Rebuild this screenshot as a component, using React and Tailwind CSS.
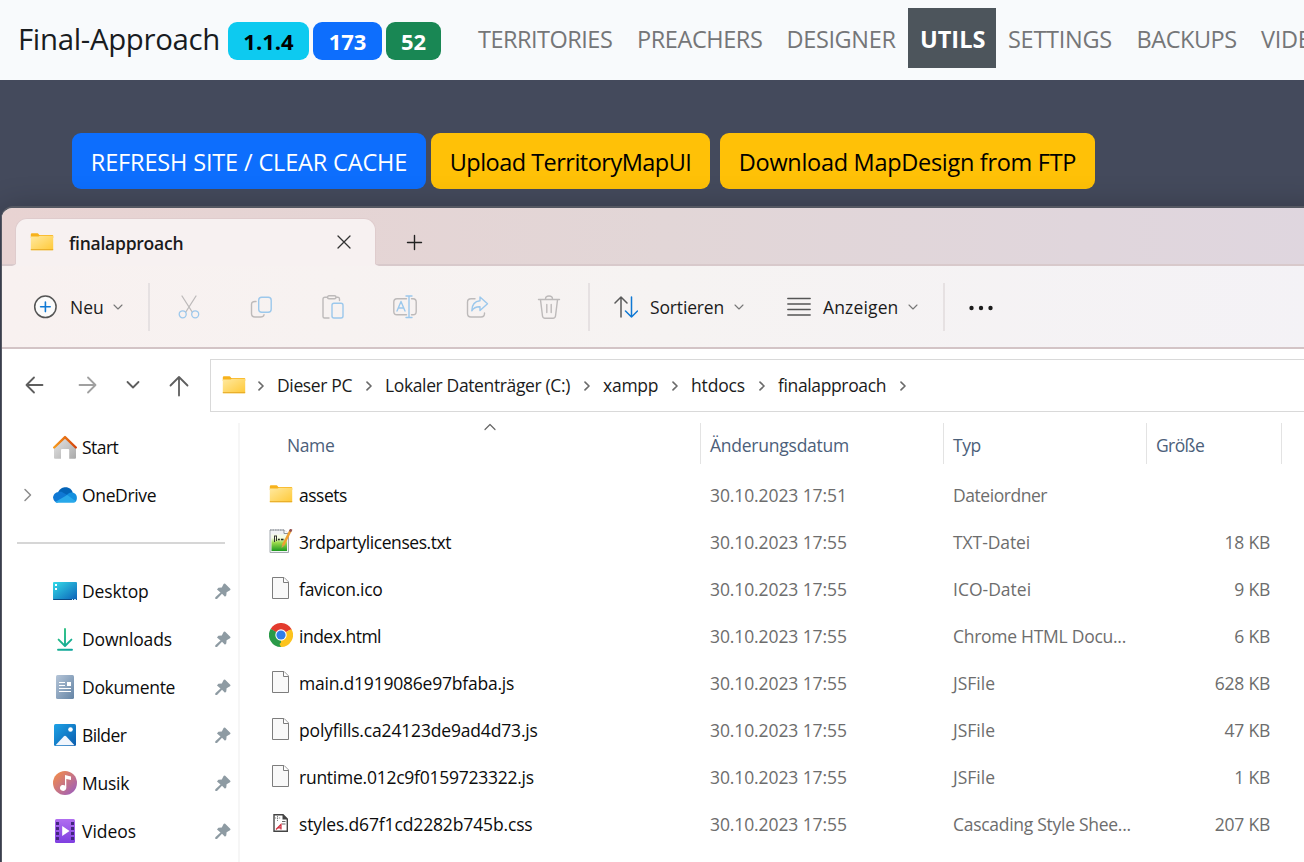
import React from 'react';

/* ---------- icons ---------- */

const Folder = () => (
  <svg width="24" height="20" viewBox="0 0 24 20" className="shrink-0">
    <defs>
      <linearGradient id="folder" x1="0" y1="0" x2="1" y2="1">
        <stop offset="0" stopColor="#ffe9a0" />
        <stop offset="1" stopColor="#ffc937" />
      </linearGradient>
    </defs>
    <path d="M.8 4V2.4Q.8 1.200 2 1.200H7.500Q8.200 1.200 8.500 1.900L9.300 3H22.400Q23.200 3 23.200 3.800V6H.8Z" fill="#f7b21c" />
    <path d="M.8 4.600H8.500L10 3.800H23.200V17.600Q23.200 18.200 22.600 18.200H1.400Q.8 18.200 .8 17.600Z" fill="url(#folder)" />
    <path d="M.8 17.700H23.200" stroke="#e5a823" strokeWidth="1" />
  </svg>
);

const Home = () => (
  <svg width="24" height="24" viewBox="0 0 24 24">
    <defs>
      <linearGradient id="wall" x1="0" y1="0" x2="1" y2="1"><stop offset="0" stopColor="#e8e8e8" /><stop offset="1" stopColor="#a9a9a9" /></linearGradient>
      <linearGradient id="roof" x1="0" y1="0" x2="1" y2="0"><stop offset="0" stopColor="#f79a1c" /><stop offset="1" stopColor="#d5440c" /></linearGradient>
    </defs>
    <path d="M1 12L12 1.500 23 12V22.800Q23 23.800 22 23.800H16.200V15Q16.200 14 15.200 14H9Q8 14 8 15V23.800H2Q1 23.800 1 22.800Z" fill="url(#wall)" />
    <path d="M1.200 12.500L12 2.100 22.800 12.500" fill="none" stroke="url(#roof)" strokeWidth="2.400" strokeLinecap="round" strokeLinejoin="round" />
  </svg>
);

const Cloud = () => (
  <svg width="24" height="16" viewBox="0 0 24 16">
    <path d="M5 5.500C7 1 10 .2 12.500 .2c4 0 6.500 2.400 7.200 5.500L14 10Z" fill="#0364b8" />
    <path d="M8.500 4.800C5 4 .1 6 .1 10.600c0 2.600 2 4.900 4 5.100L16 9Z" fill="#0f78d4" />
    <path d="M15.500 6.500C18 4.600 23.900 5.500 23.900 11c0 1.500-.6 3-1.200 3.500L12 9.500Z" fill="#1490df" />
    <path d="M2.200 14.900L14.200 8 23 14.200c-.7.9-2 1.600-3.300 1.600H5.200c-1.300 0-2.400-.4-3-.9Z" fill="#28a8ea" />
  </svg>
);

const Desktop = () => (
  <svg width="24" height="18" viewBox="0 0 24 18">
    <defs><linearGradient id="desk" x1="0" y1="0" x2="1" y2="1"><stop offset="0" stopColor="#34dbe8" /><stop offset="1" stopColor="#0b61b8" /></linearGradient></defs>
    <rect width="24" height="18" rx="1" fill="url(#desk)" />
    <path d="M0 17H24V17.200Q24 18 23 18H1Q0 18 0 17.200Z" fill="#0b4a86" />
    <path d="M2 2h2v2H2zM2 6h2v2H2z" fill="#fff" />
    <path d="M19 17h1v1h-1zM21 17h2v1h-2z" fill="#bfe6fa" />
  </svg>
);

const Download = () => (
  <svg width="24" height="24" viewBox="0 0 24 24" fill="none" strokeWidth="1.900" strokeLinecap="round" strokeLinejoin="round">
    <defs><linearGradient id="dl" gradientUnits="userSpaceOnUse" x1="4" y1="0" x2="20" y2="24"><stop offset="0" stopColor="#34c77b" /><stop offset="1" stopColor="#0aa39e" /></linearGradient></defs>
    <path d="M12 2V18.500M5.600 12.600L12 19 18.400 12.600M5 22.700H19" stroke="url(#dl)" />
  </svg>
);

const Documents = () => (
  <svg width="24" height="24" viewBox="0 0 24 24">
    <defs><linearGradient id="doc" x1="0" y1="0" x2="1" y2="1"><stop offset="0" stopColor="#b5c5d8" /><stop offset="1" stopColor="#6484a5" /></linearGradient></defs>
    <rect x="3" y="0" width="18" height="24" rx="1.500" fill="url(#doc)" />
    <path d="M6 7.500H12M6 10.500H12M6 13.500H18M6 16.500H18" stroke="#fff" strokeWidth="1.100" />
    <rect x="14" y="7" width="4" height="4" fill="#fff" />
  </svg>
);

const Pictures = () => (
  <svg width="24" height="24" viewBox="0 0 24 24">
    <defs><linearGradient id="pic" x1="0" y1="0" x2="1" y2="1"><stop offset="0" stopColor="#1ea2e6" /><stop offset="1" stopColor="#0a5cad" /></linearGradient></defs>
    <rect x="1" y="1" width="22" height="22" rx="1.500" fill="url(#pic)" />
    <circle cx="17.500" cy="6.500" r="2.300" fill="#fff" />
    <path d="M2.500 22.200L10.700 13.500Q12 12.200 13.300 13.500L21.500 22.200Z" fill="#f1f6fd" />
  </svg>
);

const Music = () => (
  <svg width="24" height="24" viewBox="0 0 24 24">
    <defs><linearGradient id="mus" x1="0" y1="0" x2="1" y2="1"><stop offset=".1" stopColor="#f08a4e" /><stop offset=".9" stopColor="#a060b8" /></linearGradient></defs>
    <circle cx="12" cy="12" r="12" fill="url(#mus)" />
    <path d="M12 4L18 5.500V9L13.300 8V17A3.200 3 0 1 1 12 14.500Z" fill="#fff" />
  </svg>
);

const Videos = () => (
  <svg width="24" height="24" viewBox="0 0 24 24">
    <defs><linearGradient id="vid" x1="0" y1="0" x2="0" y2="1"><stop offset="0" stopColor="#b06ef0" /><stop offset="1" stopColor="#7f3fe0" /></linearGradient></defs>
    <rect x="2" y="0" width="20" height="24" rx="1.500" fill="url(#vid)" />
    <path d="M3 3h3v3H3zM3 8h3v3H3zM3 13h3v3H3zM3 18h3v3H3zM18 3h3v3h-3zM18 8h3v3h-3zM18 13h3v3h-3zM18 18h3v3h-3z" fill="#43267f" />
    <path d="M9.200 7V17L16.500 12Z" fill="#fff" />
  </svg>
);

const Pin = () => (
  <svg width="16" height="17" viewBox="0 0 16 17">
    <path d="M8.600 1Q9.200 .1 10.200 .8L15.200 5.800Q16 6.700 15 7.300L11.600 9.300 11.300 12.600 10 13.700 7 10.700 2 16H.3V14.300L5.500 9.500 2 6.400 3.400 4.800 6.800 4.400Z" fill="#8e9ba3" />
  </svg>
);

const TextFile = () => (
  <svg width="24" height="24" viewBox="0 0 24 24">
    <defs><linearGradient id="npp" x1="0" y1="0" x2="0" y2="1"><stop offset=".2" stopColor="#f4fbe4" /><stop offset=".5" stopColor="#9ad94a" /><stop offset="1" stopColor="#1c9a20" /></linearGradient></defs>
    <path d="M1 1H15L19.500 5V23.500H1Z" fill="#f0f2f4" stroke="#a3a9ae" />
    <path d="M1 1H15" stroke="#8a8f94" strokeDasharray="1.500 1" />
    <path d="M15 1V4.500H19.500" fill="#fff" stroke="#8d9398" />
    <rect x="2.500" y="5.500" width="15.500" height="16.500" fill="url(#npp)" />
    <path d="M5.500 7V13M7.500 7V12M5 7H8" stroke="#333" strokeWidth="1" />
    <path d="M9 10.500h1.800M12 10.500h2.500" stroke="#222" strokeWidth="1.600" />
    <path d="M21.300 2L14 16.500" stroke="#f0a030" strokeWidth="2.600" />
    <path d="M22.300 .2L21 2.700" stroke="#96524e" strokeWidth="2.600" />
    <path d="M13 16L15 17 12.500 19Z" fill="#d89a58" />
  </svg>
);

const BlankFile = () => (
  <svg width="24" height="24" viewBox="0 0 24 24">
    <path d="M3.500 1.500H15L19.500 6V22.500H3.500Z" fill="#f9f9f9" stroke="#7d7d7d" />
    <path d="M14.500 1.500V6.500H19.500" fill="#fff" stroke="#7d7d7d" />
  </svg>
);

const Chrome = () => (
  <svg width="24" height="24" viewBox="0 0 24 24">
    <path d="M12 12L1.600 6A12 12 0 0 1 22.400 6Z" fill="#e33b2e" />
    <path d="M12 12L22.400 6A12 12 0 0 1 12 24L12 12Z" fill="#fcc31e" />
    <path d="M12 12L12 24A12 12 0 0 1 1.600 6L12 12Z" fill="#2a9a48" />
    <path d="M12 6.400H22.600L22.400 6 12 4Z" fill="#e33b2e" />
    <path d="M16.850 14.800L12 24 10.500 21Z" fill="#fcc31e" />
    <path d="M7.150 14.800L1.600 6 7 9Z" fill="#2a9a48" />
    <path d="M16.850 14.800L11.800 24H13Z" fill="#fcc31e" />
    <circle cx="12" cy="12" r="5.700" fill="#fff" />
    <circle cx="12" cy="12" r="4.600" fill="#2f7de9" />
  </svg>
);

const CssFile = () => (
  <svg width="24" height="24" viewBox="0 0 24 24">
    <path d="M5 3.700H14L18.300 8V20.300H5Z" fill="#fff" stroke="#444" strokeWidth="1.400" />
    <path d="M13.500 3V8.500H19Z" fill="#444" />
    <path d="M8.500 5V10M6 7H12" stroke="#777" strokeWidth=".9" strokeDasharray="1.200 .8" />
    <path d="M13 10.500H16.500M13 13H16.500" stroke="#666" />
    <path d="M7 18.500L12 13.500V18.500M9 16.800H12" fill="none" stroke="#cf2c3c" strokeWidth="1.200" />
  </svg>
);

const Line = ({ w = 24, h = 24, d, c = '#5c5c5c', s = 1.5, children }) => (
  <svg width={w} height={h} viewBox={`0 0 ${w} ${h}`} fill="none" stroke={c} strokeWidth={s} strokeLinecap="round" strokeLinejoin="round" className="shrink-0">
    {d && <path d={d} />}
    {children}
  </svg>
);

const G = '#bdbaba';
const B = '#9cc8ec';

const SmallChevron = () => <Line w={10} h={8} d="M1 2L5 6 9 2" c="#777" s={1.1} />;
const CrumbChevron = () => <Line w={8} h={12} d="M2 2.200L6 6 2 9.800" c="#6b6b6b" s={1.7} />;

const tools = [
  <Line key="cut" c={G} s={1.3}>
    <path d="M5 1L15.200 17M19 1L8.800 17" />
    <circle cx="5.700" cy="19.300" r="3.500" stroke={B} />
    <circle cx="18.200" cy="19.300" r="3.500" stroke={B} />
  </Line>,
  <Line key="copy" s={1.4}>
    <path d="M7 6.500H6Q2.500 6.500 2.500 9.500V18.500Q2.500 22 6 22H11.500Q14.500 22 15 19.800" stroke={G} />
    <rect x="9.700" y="2.200" width="12.500" height="15" rx="3" stroke={B} />
  </Line>,
  <Line key="paste" s={1.4}>
    <path d="M6.500 2.200H4Q2 2.200 2 4.200V21.500Q2 23 3.500 23H8M15.500 2.200H17Q18.500 2.200 18.500 4V5.500" stroke={G} />
    <rect x="6.500" y=".8" width="8.500" height="3" rx="1.500" stroke={G} />
    <rect x="11" y="8.200" width="11" height="14.800" rx="2" stroke={B} />
  </Line>,
  <Line key="rename" s={1.4}>
    <path d="M13.500 3.800H4Q.8 3.800 .8 7V16.500Q.8 19.800 4 19.800H13.500M18.500 3.800H20Q23.200 3.800 23.200 7V16.500Q23.200 19.800 20 19.800H18.500" stroke={G} />
    <path d="M16 1V22.500M13 1H19M13 22.500H19M4 16L8 6.500 12 16M5.500 13H10.500" stroke={B} />
  </Line>,
  <Line key="share" s={1.4}>
    <path d="M10 3.700H6Q2.500 3.700 2.500 7.200V18.500Q2.500 22 6 22H16Q19.500 22 19.500 18.500V18" stroke={G} />
    <path d="M15 2L22.500 8.800 15 15.500V11.800Q9.500 11.500 6.800 15.800 7 6.500 15 5.800Z" stroke={B} />
  </Line>,
  <Line key="trash" c={G} s={1.4} d="M1.500 4.500H22.500M8.500 4Q8.500 1 12 1T15.500 4M3.500 4.800L5.500 21Q5.800 23.200 8 23.200H16Q18.200 23.200 18.500 21L20.500 4.800M9.800 9.500V17.500M14.200 9.500V17.500" />,
];

/* ---------- data ---------- */

const nav = [
  ['TERRITORIES', 'w-[159px] tracking-[-0.5px]'],
  ['PREACHERS', 'w-[149.5px] tracking-[-0.42px]'],
  ['DESIGNER', 'w-[133.5px] tracking-[-0.36px]'],
  ['UTILS', 'w-[88px] bg-[#4d555c] font-bold text-white'],
  ['SETTINGS', 'w-[128.500px] tracking-[-0.28px]'],
  ['BACKUPS', 'w-[124.500px] tracking-[-0.45px]'],
  ['VIDEOS', 'tracking-[-0.3px]'],
];

const crumbs = [
  ['Dieser PC', 'w-[108px] tracking-[-0.36px]'],
  ['Lokaler Datenträger (C:)', 'w-[218px] tracking-[-0.37px]'],
  ['xampp', 'w-[88px] tracking-[-0.25px]'],
  ['htdocs', 'w-[87px] tracking-[-0.15px]'],
  ['finalapproach', 'w-[141px] tracking-[-0.37px]'],
];

const places = [
  ['Desktop', Desktop, 'tracking-[-0.12px]'],
  ['Downloads', Download, 'tracking-[-0.14px]'],
  ['Dokumente', Documents, 'tracking-[-0.32px]'],
  ['Bilder', Pictures, 'tracking-[-0.6px]'],
  ['Musik', Music, 'tracking-[-0.25px]'],
  ['Videos', Videos, 'tracking-[-0.05px]'],
];

const files = [
  ['assets', Folder, 'tracking-[-0.5px]', '30.10.2023 17:51', 'Dateiordner', 'tracking-[-0.45px]', ''],
  ['3rdpartylicenses.txt', TextFile, 'tracking-[-0.45px]', '30.10.2023 17:55', 'TXT-Datei', 'tracking-[-0.08px]', '18 KB'],
  ['favicon.ico', BlankFile, 'tracking-[-0.25px]', '30.10.2023 17:55', 'ICO-Datei', '', '9 KB'],
  ['index.html', Chrome, 'tracking-[-0.5px]', '30.10.2023 17:55', 'Chrome HTML Docu...', 'tracking-[-0.27px]', '6 KB'],
  ['main.d1919086e97bfaba.js', BlankFile, 'tracking-[-0.22px]', '30.10.2023 17:55', 'JSFile', '', '628 KB'],
  ['polyfills.ca24123de9ad4d73.js', BlankFile, 'tracking-[-0.17px]', '30.10.2023 17:55', 'JSFile', '', '47 KB'],
  ['runtime.012c9f0159723322.js', BlankFile, 'tracking-[-0.25px]', '30.10.2023 17:55', 'JSFile', '', '1 KB'],
  ['styles.d67f1cd2282b745b.css', CssFile, 'tracking-[-0.14px]', '30.10.2023 17:55', 'Cascading Style Shee...', 'tracking-[-0.28px]', '207 KB'],
];

/* ---------- sections ---------- */

const Badge = ({ className, children }) => (
  <span className={`flex h-[38px] items-center justify-center rounded-[9px] text-[22px] font-bold ${className}`}>{children}</span>
);

function SiteNav() {
  return (
    <header className="flex h-20 shrink-0 items-start overflow-hidden bg-[#f8fafc]">
      <div className="flex h-[82px] w-[466px] shrink-0 items-center gap-1 pl-[18px]">
        <span className="w-[206px] pb-1 text-[29.4px] tracking-[-0.32px] text-[#191c1f]">Final-Approach</span>
        <Badge className="w-[81px] bg-[#0dcaf0] text-black">1.1.4</Badge>
        <Badge className="w-[69px] bg-[#0d6efd] text-white">173</Badge>
        <Badge className="w-[55px] bg-[#198754] text-white">52</Badge>
      </div>
      <nav className="mt-2 flex">
        {nav.map(([label, cls]) => (
          <a key={label} className={`flex h-[60px] shrink-0 items-center px-3 pt-1 text-[23.5px] text-[#757678] ${cls}`}>{label}</a>
        ))}
      </nav>
    </header>
  );
}

function TabStrip() {
  return (
    <div className="flex h-[58px] items-end border-b-2 border-[#d8c9cb] bg-linear-to-r from-[#e8d3d2] via-[#e2d6d7] to-[#dfd6df] pl-[13px]">
      <div className="relative -mb-0.5 flex h-[48px] w-[361px] items-center rounded-t-[12px] border-x border-t border-[#dfcccd] bg-[#f7f1f1] pb-px pl-[14px]">
        <Folder />
        <span className="ml-[15px] w-[267px] pt-0.5 text-[17.5px] font-semibold tracking-[-0.25px] text-[#1b1b1b]">finalapproach</span>
        <Line w={16} h={16} d="M2 2L14 14M14 2L2 14" c="#333" s={1.3} />
        <svg width="5" height="5" viewBox="0 0 5 5" className="absolute -left-[4px] bottom-0">
          <path d="M5 0Q5 4 0 5H5Z" fill="#f7f1f1" />
        </svg>
        <svg width="5" height="5" viewBox="0 0 5 5" className="absolute -right-[4px] bottom-0">
          <path d="M0 0Q0 4 5 5H0Z" fill="#f7f1f1" />
        </svg>
      </div>
      <div className="mb-[13px] ml-[30px]">
        <Line w={17} h={17} d="M8.500 1.500V15.500M1.500 8.500H15.500" c="#222" s={1.4} />
      </div>
    </div>
  );
}

const Divider = () => <div className="h-12 w-0.5 shrink-0 bg-[#e6e1e2]" />;

function Toolbar() {
  return (
    <div className="flex h-[83px] items-center border-b-2 border-[#d3c4c6] bg-linear-to-r from-[#f8f1f0] via-[#f6f3f2] to-[#f4f2f6] text-[17.5px] text-[#1b1b1b]">
      <div className="flex w-[146px] items-center pl-[31px]">
        <Line>
          <circle cx="12.400" cy="11.800" r="10.700" fill="#fbfbfb" stroke="#555" />
          <path d="M7.600 11.800H17.200M12.400 7V16.600" stroke="#0f78d4" strokeWidth="1.600" />
        </Line>
        <span className="ml-[13px] w-[43px] pt-0.5">Neu</span>
        <SmallChevron />
      </div>
      <Divider />
      <div className="mx-[3px] flex">
        {tools.map((icon, i) => (
          <div key={i} className="flex w-[72px] items-center justify-center">{icon}</div>
        ))}
      </div>
      <Divider />
      <div className="flex w-[173px] items-center pl-6">
        <Line s={1.500}>
          <path d="M7 2V22M1 8L7 2 13 8" stroke="#5a5a5a" />
          <path d="M17.500 2V22M11.500 16L17.500 22 23.500 16" stroke="#0f78d4" />
        </Line>
        <span className="ml-3 w-[84px] shrink-0 pt-0.5 tracking-[-0.15px]">Sortieren</span>
        <SmallChevron />
      </div>
      <div className="flex w-[180px] items-center pl-6">
        <Line d="M.8 3.500H23.200M.8 9H23.200M.8 14.500H23.200M.8 20H23.200" s={1.400} c="#555" />
        <span className="ml-3 w-[85px] shrink-0 pt-0.5 tracking-[0.15px]">Anzeigen</span>
        <SmallChevron />
      </div>
      <Divider />
      <svg width="26" height="8" viewBox="0 0 26 8" className="mt-0.5 ml-[23px]" fill="#1b1b1b">
        <circle cx="3.500" cy="4" r="2.200" />
        <circle cx="13" cy="4" r="2.200" />
        <circle cx="22.500" cy="4" r="2.200" />
      </svg>
    </div>
  );
}

function AddressRow() {
  return (
    <div className="flex h-[74px] items-start pt-[10px]">
      <div className="flex h-[52px] w-[208px] shrink-0 items-center pl-5">
        <Line d="M4.500 12H20.500M12 4.500L4.500 12 12 19.500" c="#5e5e5e" s={1.8} />
        <div className="ml-[30px]"><Line d="M3.500 12H19.500M12 4.500L19.500 12 12 19.500" c="#a0a0a0" s={1.8} /></div>
        <div className="ml-[21px]"><Line d="M6.500 9L12 14.500 17.500 9" c="#5e5e5e" s={1.8} /></div>
        <div className="ml-[22px]"><Line d="M12 4V22.500M3.500 12.500L12 4 20.500 12.500" c="#5e5e5e" s={1.8} /></div>
      </div>
      <div className="flex h-[53px] flex-1 items-center border-y border-l border-[#d9d9d9] pb-0.5 pl-[11px] text-[17.5px] text-[#1b1b1b]">
        <Folder />
        <div className="mr-3 ml-[11px] pt-0.5"><CrumbChevron /></div>
        {crumbs.map(([label, cls]) => (
          <div key={label} className={`flex shrink-0 items-center justify-between pt-0.5 pr-3 whitespace-nowrap ${cls}`}>
            {label}
            <CrumbChevron />
          </div>
        ))}
      </div>
    </div>
  );
}

function Place({ icon: Icon, label, cls, pinned, expandable }) {
  return (
    <div className="flex h-12 items-center pr-[7px] pl-[19px]">
      <div className="w-[32px]">{expandable && <Line w={14} h={16} d="M4 2.500L9.500 8 4 13.500" c="#8c8c8c" />}</div>
      <div className="flex w-6 justify-center"><Icon /></div>
      <span className={`ml-[5px] flex-1 pt-px ${cls}`}>{label}</span>
      {pinned && <Pin />}
    </div>
  );
}

function Sidebar() {
  return (
    <aside className="w-[238px] shrink-0 border-r-2 border-[#f6f6f6] text-[17.5px] text-[#0c0c0c]">
      <Place icon={Home} label="Start" cls="tracking-[-0.55px]" />
      <Place icon={Cloud} label="OneDrive" cls="tracking-[-0.35px]" expandable />
      <div className="flex h-12 items-center"><div className="ml-[15px] h-0.5 w-[208px] bg-[#d6d6d6]" /></div>
      {places.map(([label, icon, cls]) => (
        <Place key={label} icon={icon} label={label} cls={cls} pinned />
      ))}
    </aside>
  );
}

function FileList() {
  return (
    <section className="flex-1 text-[17.5px] text-[#6d6d6d]">
      <div className="flex h-[49px] items-start text-[#4c607a]">
        <div className="flex h-[41px] w-[461px] items-center border-r border-[#e3e3e3] pt-[3px] pl-[47px]">
          <span className="w-[197px] tracking-[-0.4px]">Name</span>
          <div className="mb-[36px] -ml-[1.500px]"><Line w={14} h={8} d="M2 6.500L7 1.500 12 6.500" c="#666" s={1.2} /></div>
        </div>
        <div className="flex h-[41px] w-[243px] items-center border-r border-[#e3e3e3] pt-[3px] pl-[9px] tracking-[-0.24px]">Änderungsdatum</div>
        <div className="flex h-[41px] w-[203px] items-center border-r border-[#e3e3e3] pt-[3px] pl-[9px] tracking-[-0.5px]">Typ</div>
        <div className="flex h-[41px] w-[135px] items-center border-r border-[#e3e3e3] pt-[3px] pl-[9px] tracking-[-0.6px]">Größe</div>
      </div>
      {files.map(([name, Icon, cls, date, type, typeCls, size]) => (
        <div key={name} className="flex h-[47px] items-center pl-[29px]">
          <div className="flex w-6 justify-center pb-[3px]"><Icon /></div>
          <span className={`ml-[6px] w-[411px] text-[#0c0c0c] ${cls}`}>{name}</span>
          <span className="w-[243px] tracking-[-0.1px]">{date}</span>
          <span className={`w-[218px] ${typeCls}`}>{type}</span>
          <span className="w-[99px] text-right tracking-[-0.22px]">{size}</span>
        </div>
      ))}
    </section>
  );
}

export default function App() {
  return (
    <div className="flex h-[862px] w-[1304px] flex-col overflow-hidden bg-[#444a5c] font-['Open_Sans','Noto_Sans',sans-serif] whitespace-nowrap">
      <SiteNav />
      <div className="flex h-[126px] shrink-0 items-start pt-[53px] pl-[72px] text-[23.5px]">
        <button className="flex h-14 w-[354px] items-center justify-center rounded-[9px] bg-[#0d6efd] pt-1 tracking-[-0.15px] text-white">REFRESH SITE / CLEAR CACHE</button>
        <button className="ml-[5px] flex h-14 w-[279px] items-center justify-center rounded-[9px] bg-[#ffc107] pt-1 tracking-[-0.52px] text-black">Upload TerritoryMapUI</button>
        <button className="ml-2.5 flex h-14 w-[375px] items-center justify-center rounded-[9px] bg-[#ffc107] pt-1 tracking-[-0.3px] text-black">Download MapDesign from FTP</button>
      </div>
      <div className="h-[656px] shrink-0 pl-px">
        <main className="h-[670px] w-[1330px] overflow-hidden rounded-tl-[12px] border-t-2 border-l border-[#555862] bg-white shadow-[0_6px_34px_rgba(0,0,0,0.32)]">
          <TabStrip />
          <Toolbar />
          <AddressRow />
          <div className="flex h-[460px]">
            <Sidebar />
            <FileList />
          </div>
        </main>
      </div>
    </div>
  );
}
